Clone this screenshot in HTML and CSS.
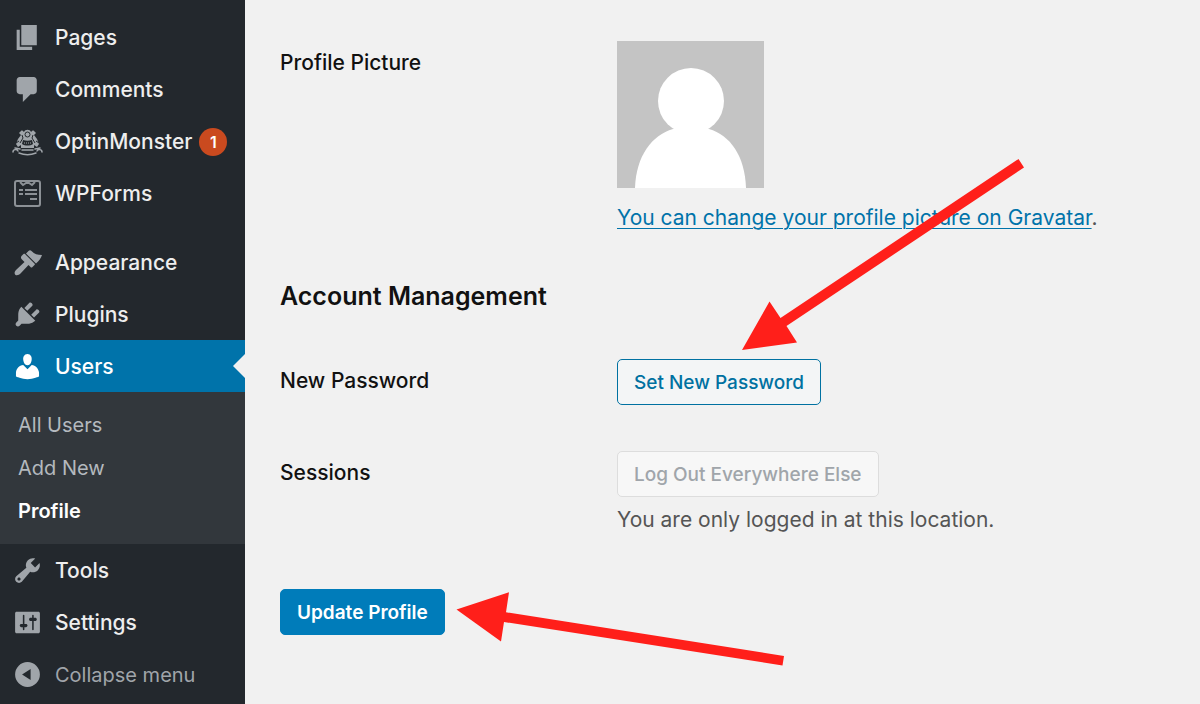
FILE: index.html
```
<!DOCTYPE html>
<html lang="en">
<head>
    <meta charset="UTF-8">
    <meta name="viewport" content="width=device-width, initial-scale=1.0">
    <title>Profile</title>
    <link rel="stylesheet" href="styles.css">
</head>
<body>
    <nav class="sidebar">
        <ul class="menu">
            <li>
                <a href="#" class="menu-link">
                    <svg class="icon" viewBox="0 0 20 20"><path d="M6 15V2h10v13H6zm-1 1h8v2H3V5h2v11z"/></svg>
                    Pages
                </a>
            </li>
            <li>
                <a href="#" class="menu-link">
                    <svg class="icon" viewBox="0 0 20 20"><path d="M5 2h9c1.100 0 2 .9 2 2v7c0 1.100-.9 2-2 2h-2l-5 5v-5H5c-1.100 0-2-.9-2-2V4c0-1.100.9-2 2-2z"/></svg>
                    Comments
                </a>
            </li>
            <li>
                <a href="#" class="menu-link">
                    <svg class="icon" viewBox="0 0 31 31">
                        <path d="M9 5c1-1 2 0 3 1 1-3 6-3 7 0 1-1 2-2 3-1l2 2-2 2 3 4 2 5-2 3-3-2v3H9v-3l-3 2-2-3 2-5 3-4-2-2z"/>
                        <g fill="none" stroke="#a0a5aa" stroke-width="1.500" stroke-linecap="round">
                            <path d="M1 26c0-3 4-3 5-1M30 26c0-3-4-3-5-1M3 22l5 1M28 22l-5 1M7 27c5 2 12 2 17 0M10 24h11"/>
                        </g>
                        <g fill="none" stroke="#23282d" stroke-width="1">
                            <circle cx="15.500" cy="8.500" r="2.500"/>
                            <path d="M10 9l1 3-3 5M21 9l-1 3 3 5M4 17l3-2M27 17l-3-2"/>
                        </g>
                        <path d="M11 14c3 1 6 1 9 0l1 4c-3 2-8 2-11 0z" fill="#23282d"/>
                        <path d="M12 17h7" stroke="#a0a5aa" stroke-dasharray="1 1"/>
                    </svg>
                    OptinMonster
                    <span class="badge">1</span>
                </a>
            </li>
            <li>
                <a href="#" class="menu-link">
                    <svg class="icon" viewBox="0 0 31 31">
                        <g fill="none" stroke="#8c9196" stroke-width="2">
                            <rect x="3" y="3" width="25" height="25" rx="2"/>
                            <path d="M8 4l3 3 4.500-3L20 7l3-3"/>
                            <path d="M7 12h4M13 12h12M7 16h4M13 16h12M18 21h7"/>
                        </g>
                    </svg>
                    WPForms
                </a>
            </li>
            <li class="menu-break">
                <a href="#" class="menu-link">
                    <svg class="icon" viewBox="0 0 31 31">
                        <path d="M14 6.500l2.500-2.500c1-1 2-1 3 0 3 3 6 4 10.500 4-1 3-3 6-6 8.500z"/>
                        <path d="M9.500 9l2-2c.5-.5 1-.5 1.500 0l9.500 9.500c.5.5.5 1 0 1.500l-2 2c-.7.7-1.500.7-2 0l-2-2-8 8.500c-1.500 1.500-3 2-5 1.500-1.500-1.500-1-3.500.5-5l8.500-8-3-3c-.7-1-.7-2 0-3z"/>
                    </svg>
                    Appearance
                </a>
            </li>
            <li>
                <a href="#" class="menu-link">
                    <svg class="icon" viewBox="0 0 20 20"><path d="M13.110 4.360L9.870 7.600 8 5.730l3.240-3.240c.35-.34 1.050-.2 1.560.32.52.51.66 1.210.31 1.550zm-8 1.770l.91-1.120 9.010 9.010-1.190.84c-.71.71-2.630 1.160-3.820 1.160H6.140L4.900 17.260c-.59.59-1.540.59-2.120 0-.59-.58-.59-1.530 0-2.120l1.240-1.240v-3.880c0-1.130.4-3.190 1.090-3.890zm7.260 3.970l3.240-3.240c.34-.35 1.040-.21 1.550.31.52.51.66 1.210.31 1.550l-3.240 3.250z"/></svg>
                    Plugins
                </a>
            </li>
            <li>
                <a href="#" class="menu-link current">
                    <svg class="icon" viewBox="0 0 20 20"><path d="M10 9.250c-2.270 0-2.730-3.440-2.730-3.440C7 4.020 7.820 2 9.970 2c2.160 0 2.980 2.020 2.710 3.810 0 0-.41 3.440-2.680 3.440zm0 2.570L12.720 9c2.390 0 4.720 2.830 4.720 5.030v2.490s-3.650 1.630-7.440 1.630c-3.650 0-7.440-1.630-7.440-1.630v-2.490c0-2.250 2.140-4.980 4.670-4.980z"/></svg>
                    Users
                </a>
                <ul class="submenu">
                    <li><a href="#">All Users</a></li>
                    <li><a href="#">Add New</a></li>
                    <li><a href="#" class="active">Profile</a></li>
                </ul>
            </li>
            <li>
                <a href="#" class="menu-link">
                    <svg class="icon" viewBox="0 0 20 20"><path d="M16.680 9.770c-1.340 1.340-3.300 1.670-4.950.99l-5.410 6.520c-.99.99-2.590.99-3.580 0s-.99-2.590 0-3.570l6.520-5.420c-.68-1.650-.35-3.610.99-4.950 1.280-1.280 3.120-1.620 4.720-1.060l-2.890 2.890 2.820 2.820 2.860-2.870c.53 1.580.18 3.390-1.080 4.650zM3.810 16.210c.4.39 1.040.39 1.430 0 .4-.4.4-1.040 0-1.430-.39-.4-1.030-.4-1.430 0-.39.39-.39 1.030 0 1.430z"/></svg>
                    Tools
                </a>
            </li>
            <li>
                <a href="#" class="menu-link">
                    <svg class="icon" viewBox="0 0 20 20"><path d="M18 16V4c0-.55-.45-1-1-1H3c-.55 0-1 .45-1 1v12c0 .55.45 1 1 1h14c.55 0 1-.45 1-1zM8 11h1c.55 0 1 .45 1 1s-.45 1-1 1H8v1.500c0 .28-.22.5-.5.5s-.5-.22-.5-.5V13H6c-.55 0-1-.45-1-1s.45-1 1-1h1V5.500c0-.28.22-.5.5-.5s.5.22.5.5V11zm5-2h-1c-.55 0-1-.45-1-1s.45-1 1-1h1V5.500c0-.28.22-.5.5-.5s.5.22.5.5V7h1c.55 0 1 .45 1 1s-.45 1-1 1h-1v5.500c0 .28-.22.5-.5.5s-.5-.22-.5-.5V9z"/></svg>
                    Settings
                </a>
            </li>
            <li>
                <button type="button" class="menu-link collapse">
                    <svg class="icon" viewBox="0 0 20 20"><path fill-rule="evenodd" d="M10 2a8 8 0 1 1 0 16 8 8 0 0 1 0-16zM12 6.500L6.500 10l5.500 3.500z"/></svg>
                    Collapse menu
                </button>
            </li>
        </ul>
    </nav>

    <main class="content">
        <form>
            <div class="form-row">
                <div class="form-label">Profile Picture</div>
                <div class="form-field">
                    <svg class="avatar" viewBox="0 0 147 147" role="img" aria-label="Avatar">
                        <rect width="147" height="147" fill="#c4c4c4"/>
                        <circle cx="74" cy="60" r="33" fill="#fff"/>
                        <path d="M18 147c1-32 17-53 38-59h36c21 6 36 27 37 59z" fill="#fff"/>
                    </svg>
                    <p class="avatar-note"><a href="#">You can change your profile picture on Gravatar</a>.</p>
                </div>
            </div>

            <h2>Account Management</h2>

            <div class="form-row">
                <label class="form-label" for="set-password">New Password</label>
                <div class="form-field">
                    <button type="button" id="set-password" class="button">Set New Password</button>
                </div>
            </div>
            <div class="form-row">
                <label class="form-label" for="sessions">Sessions</label>
                <div class="form-field">
                    <button type="button" id="sessions" class="button" disabled>Log Out Everywhere Else</button>
                    <p class="description">You are only logged in at this location.</p>
                </div>
            </div>

            <button type="submit" class="button button-primary">Update Profile</button>
        </form>
    </main>

    <svg class="arrows" viewBox="0 0 1200 704" aria-hidden="true">
        <path d="M742 350L769.500 301.500 780.500 318 1018.500 159 1024 167.500 786.500 326 797 342.500z"/>
        <path d="M456.500 609.500L509 592.300 506 612.300 784 656 782.500 665.500 504 622 501 641.500z"/>
    </svg>
</body>
</html>
```
FILE: styles.css
```
* {
    margin: 0;
    padding: 0;
    box-sizing: border-box;
}
body {
    display: flex;
    min-height: 100vh;
    font-family: Inter, Roboto, sans-serif;
    font-size: 21px;
    line-height: 30px;
    color: #555;
    background: #f1f1f1;
}
ul {
    list-style: none;
}
button {
    font-family: inherit;
    cursor: pointer;
}

/* Sidebar */
.sidebar {
    flex: none;
    width: 245px;
    padding-top: 11px;
    background: #23282d;
}
.menu-link {
    position: relative;
    display: flex;
    align-items: center;
    width: 100%;
    height: 52px;
    padding: 2px 0 0 12px;
    font-size: 21px;
    font-weight: 500;
    color: #eee;
    text-decoration: none;
}
.icon {
    flex: none;
    width: 31px;
    height: 31px;
    margin: 0 12px 2px 0;
    fill: #a0a5aa;
}
.menu-break {
    margin-top: 17px;
}
.badge {
    width: 28px;
    height: 28px;
    margin-left: 7px;
    border-radius: 50%;
    font-size: 16px;
    font-weight: 600;
    line-height: 28px;
    text-align: center;
    color: #fff;
    background: #ca4a1f;
}
.current {
    color: #fff;
    background: #0073aa;
}
.current .icon {
    fill: #fff;
}
.current::after {
    content: "";
    position: absolute;
    top: 14px;
    right: 0;
    border: 12px solid transparent;
    border-left: none;
    border-right-color: #f1f1f1;
}
.submenu {
    padding: 12px 0 11px;
    background: #32373c;
}
.submenu a {
    display: block;
    padding-left: 18px;
    font-size: 20px;
    line-height: 43px;
    color: #b4b9be;
    text-decoration: none;
}
.submenu .active {
    font-weight: 600;
    color: #fff;
}
.collapse {
    border: none;
    font-size: 20px;
    font-weight: 400;
    color: #a0a5aa;
    background: none;
}

/* Profile form */
.content {
    flex: 1;
    padding: 41px 35px;
}
.form-row {
    display: grid;
    grid-template-columns: 337px 1fr;
    margin-bottom: 46px;
}
.form-label {
    padding-top: 7px;
    font-weight: 500;
    color: #111;
}
.avatar {
    display: block;
    width: 147px;
    height: 147px;
}
.avatar-note {
    margin-top: 15px;
}
.avatar-note a {
    color: #0073aa;
    text-decoration-thickness: 1px;
    text-underline-offset: 3px;
}
h2 {
    margin-bottom: 48px;
    padding-top: 2px;
    font-size: 25px;
    font-weight: 600;
    line-height: 30px;
    color: #111;
}
.button {
    height: 46px;
    padding: 0 16px;
    border: 1px solid #0071a1;
    border-radius: 5px;
    font-size: 19px;
    font-weight: 500;
    color: #0071a1;
    background: #f3f5f6;
}
.button:disabled {
    border-color: #ddd;
    color: #a0a5aa;
    background: #f7f7f7;
    cursor: default;
}
.button-primary {
    margin-top: 8px;
    border-color: #007cba;
    font-weight: 600;
    color: #fff;
    background: #007cba;
}
.description {
    margin-top: 8px;
}

/* Pointers to the two buttons */
.arrows {
    position: absolute;
    top: 0;
    left: 0;
    width: 1200px;
    height: 704px;
    fill: #ff1f1a;
    pointer-events: none;
}
```
